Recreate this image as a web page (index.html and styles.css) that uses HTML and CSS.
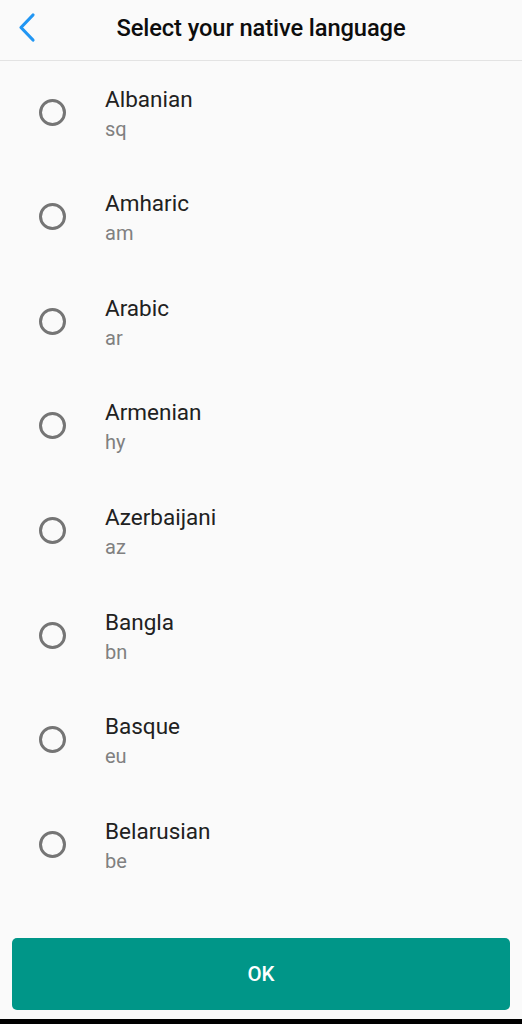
FILE: index.html
```html
<!DOCTYPE html>
<html>
<head>
<meta charset="utf-8">
<link rel="stylesheet" href="styles.css">
</head>
<body>
<div class="screen">
  <header class="header">
    <button class="back" aria-label="Back">
      <svg width="22" height="32" viewBox="0 0 22 32"><polyline points="15,3 3,15.5 15,28" fill="none" stroke="#2196f3" stroke-width="3.2" stroke-linecap="round" stroke-linejoin="round"/></svg>
    </button>
    <h1 class="title">Select your native language</h1>
    <span></span>
  </header>
  <ul class="list">
    <li class="row"><span class="radio"></span><div class="text"><div class="name">Albanian</div><div class="code">sq</div></div></li>
    <li class="row"><span class="radio"></span><div class="text"><div class="name">Amharic</div><div class="code">am</div></div></li>
    <li class="row"><span class="radio"></span><div class="text"><div class="name">Arabic</div><div class="code">ar</div></div></li>
    <li class="row"><span class="radio"></span><div class="text"><div class="name">Armenian</div><div class="code">hy</div></div></li>
    <li class="row"><span class="radio"></span><div class="text"><div class="name">Azerbaijani</div><div class="code">az</div></div></li>
    <li class="row"><span class="radio"></span><div class="text"><div class="name">Bangla</div><div class="code">bn</div></div></li>
    <li class="row"><span class="radio"></span><div class="text"><div class="name">Basque</div><div class="code">eu</div></div></li>
    <li class="row"><span class="radio"></span><div class="text"><div class="name">Belarusian</div><div class="code">be</div></div></li>
  </ul>
  <footer class="footer">
    <button class="ok">OK</button>
  </footer>
  <div class="navbar"></div>
</div>
</body>
</html>
```
FILE: styles.css
```css
* { box-sizing: border-box; }
html, body { margin: 0; padding: 0; }
body {
  background: #fafafa;
  font-family: Roboto, "Noto Sans", sans-serif;
}
.screen {
  width: 522px;
  height: 1024px;
  display: flex;
  flex-direction: column;
  overflow: hidden;
}
.header {
  height: 61px;
  flex: none;
  display: grid;
  grid-template-columns: 60px 1fr 60px;
  align-items: center;
  border-bottom: 1px solid #e3e3e3;
}
.back {
  border: 0;
  background: none;
  padding: 0 0 0 18px;
  margin: 0;
  height: 60px;
  display: flex;
  align-items: center;
  justify-content: flex-start;
}
.back svg { display: block; margin-top: -4px; }
.title {
  margin: 0;
  text-align: center;
  font-size: 23.7px;
  font-weight: 500;
  color: #0d0d0d;
  margin-top: -4px;
  letter-spacing: -0.1px;
  white-space: nowrap;
}
.list {
  list-style: none;
  margin: 0;
  padding: 0;
  flex: 1;
}
.row {
  height: 104.57px;
  display: flex;
  align-items: center;
  padding-left: 39px;
}
.radio {
  width: 27px;
  height: 27px;
  border: 3px solid #757575;
  border-radius: 50%;
  flex: none;
  margin-top: -2px;
}
.text {
  margin-left: 39px;
  margin-top: 0;
}
.name {
  font-size: 22.5px;
  color: #212121;
  line-height: 28px;
}
.code {
  font-size: 20px;
  color: #808080;
  line-height: 26px;
  margin-top: 3px;
}
.footer {
  flex: none;
  padding: 0 12px 9px 12px;
}
.ok {
  width: 100%;
  height: 72px;
  border: 0;
  border-radius: 5px;
  background: #009688;
  color: #fff;
  font-family: Roboto, "Noto Sans", sans-serif;
  font-size: 20.5px;
  font-weight: 500;
  display: block;
}
.navbar {
  height: 5px;
  flex: none;
  background: #000;
}
```
